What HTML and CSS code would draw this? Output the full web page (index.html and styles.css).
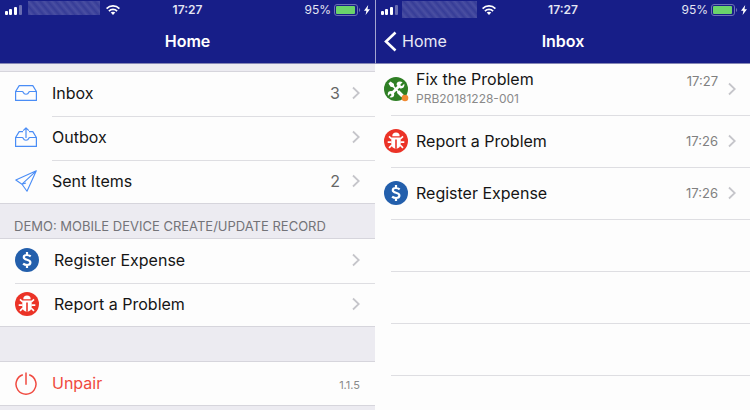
FILE: index.html
```
<!DOCTYPE html>
<html lang="en">
<head>
<meta charset="utf-8">
<title>Home and Inbox</title>
<link rel="stylesheet" href="styles.css">
</head>
<body>
<svg class="defs" aria-hidden="true">
  <symbol id="signal" viewBox="0 0 18 10"><g fill="#fff"><rect x="0" y="6" width="3" height="4" rx="1"/><rect x="4" y="4" width="3" height="6" rx="1"/><rect x="9" y="2" width="3" height="8" rx="1"/><rect x="14" y="0" width="3" height="10" rx="1" opacity=".35"/></g></symbol>
  <symbol id="wifi" viewBox="0 0 14 10"><g fill="none" stroke="#fff" stroke-width="1.7"><path d="M.6 3.6C4.2 0 9.8 0 13.4 3.6"/><path d="M2.9 6.1c2.3-2.2 5.900-2.200 8.200 0"/></g><path d="M4.700 7.600c1.300-1.200 3.300-1.200 4.600 0L7 10z" fill="#fff"/></symbol>
  <symbol id="battery" viewBox="0 0 27 12"><rect x=".5" y=".5" width="23" height="11" rx="2.500" fill="none" stroke="#6c70b4"/><rect x="2" y="2" width="19" height="8" rx="1" fill="#6bd46b"/><path d="M25 4c1.600.8 1.600 3.200 0 4z" fill="#6c70b4"/></symbol>
  <symbol id="bolt" viewBox="0 0 6 10"><path d="M4.200 0L0 5.800h2.400L1.600 10 6 4.200H3.500z" fill="#fff"/></symbol>
  <symbol id="chevron" viewBox="0 0 8 14"><path d="M1 1.500L6.800 7 1 12.500" fill="none" stroke="#c5c5ca" stroke-width="1.800"/></symbol>
  <symbol id="inbox" viewBox="0 0 22 16"><g fill="none" stroke="#4a8df6" stroke-width="1.200" stroke-linejoin="round"><path d="M.6 6.500L4.200.6h13.600l3.600 5.900v8.900H.6z"/><path d="M.6 6.500h6.600c.6 0 .9.400 1.100 1 .8 2.300 4.600 2.300 5.400 0 .2-.6.500-1 1.100-1h6.600"/></g></symbol>
  <symbol id="outbox" viewBox="0 0 22 20"><g fill="none" stroke="#4a8df6" stroke-width="1.200" stroke-linejoin="round"><path d="M8 4.600H4.200L.6 10.500v8.900h20.800v-8.900l-3.600-5.900H14"/><path d="M.6 10.500h6.600c.6 0 .9.400 1.100 1 .8 2.300 4.600 2.300 5.400 0 .2-.6.500-1 1.100-1h6.600"/><path d="M11 11V1M8.200 3.600L11 .8l2.800 2.800"/></g></symbol>
  <symbol id="plane" viewBox="0 0 22 22"><path d="M21.300.8L.8 10l6.200 4.200L12 21.200zM21.300.8L7 14.200M7 14.200l4-1.200" fill="none" stroke="#4a8df6" stroke-width="1.100" stroke-linejoin="round"/></symbol>
  <symbol id="power" viewBox="0 0 22 23"><path d="M7.800 2.700a10 10 0 1 0 6.400 0M11 .5v12.200" fill="none" stroke="#f04a40" stroke-width="1.500"/></symbol>
  <symbol id="dollar" viewBox="0 0 24 24"><circle cx="12" cy="12" r="12" fill="#235fac"/><path d="M15.700 8.300c-1.300-1-2.500-1.300-3.900-1.300-1.700 0-3 .8-3 2.200 0 3.300 6.600 1.700 6.600 5.300 0 1.600-1.400 2.500-3.300 2.500-1.600 0-3-.5-4-1.400M12 4v3.400M12 16.700V20" fill="none" stroke="#fff" stroke-width="2.200"/></symbol>
  <symbol id="bug" viewBox="0 0 24 24"><circle cx="12" cy="12" r="12" fill="#eb3327"/><path d="M8.300 7.300a3.700 3.700 0 0 1 7.400 0z" fill="#fff"/><path d="M7.300 8.500h9.400V15c0 2.700-1.800 4.700-4.700 4.700S7.300 17.700 7.300 15z" fill="#fff"/><path d="M7.700 10L5 7.300M16.300 10L19 7.300M7.500 13.200H3.700M16.500 13.200h3.800M7.900 16L5 18.800M16.100 16l2.900 2.800" stroke="#fff" stroke-width="1.700"/><path d="M12 10.500v9.200" stroke="#eb3327" stroke-width="1.600"/></symbol>
  <symbol id="tools" viewBox="0 0 24 24" overflow="visible"><circle cx="12" cy="12" r="12" fill="#2f7f25"/><path d="M7.500 7.500l9.500 10" stroke="#fff" stroke-width="1.800"/><path d="M4.500 6.500l2-2 3.300 2.200.4 2-1.600 1.500-2-.4z" fill="#fff"/><path d="M14 14.500l4.500 4.500" stroke="#fff" stroke-width="3.400"/><path d="M15.200 9L7.500 16.700" stroke="#fff" stroke-width="2.700"/><path d="M18.600 5.200l-2.200 2.200.3 1.300 1.300.3 2.200-2.200c.9 3-1.500 5.400-4.300 4.500l-3.200-3.200c-.8-2.700 2.400-4.700 5.900-2.900z" fill="#fff"/><circle cx="7" cy="17.300" r="3.200" fill="#fff"/><path d="M7 17.300L3.700 20.600" stroke="#2f7f25" stroke-width="2"/><circle cx="21" cy="21" r="3.300" fill="#f08a33"/></symbol>
</svg>
<div class="screens">
  <section class="screen">
    <header class="topbar">
      <div class="status">
        <div class="carrier"><svg class="signal"><use href="#signal"/></svg><span class="redacted"></span><svg class="wifi"><use href="#wifi"/></svg></div>
        <time>17:27</time>
        <div class="power-state"><span>95%</span><svg class="battery"><use href="#battery"/></svg><svg class="bolt"><use href="#bolt"/></svg></div>
      </div>
      <nav class="navbar"><span></span><h1>Home</h1><span></span></nav>
    </header>
    <main class="home">
      <ul class="group">
        <li><button class="row"><svg class="icon inbox"><use href="#inbox"/></svg><span class="label">Inbox</span><span class="count">3</span><svg class="chevron"><use href="#chevron"/></svg></button></li>
        <li><button class="row"><svg class="icon outbox"><use href="#outbox"/></svg><span class="label">Outbox</span><svg class="chevron"><use href="#chevron"/></svg></button></li>
        <li><button class="row"><svg class="icon plane"><use href="#plane"/></svg><span class="label">Sent Items</span><span class="count">2</span><svg class="chevron"><use href="#chevron"/></svg></button></li>
      </ul>
      <h2 class="group-title">DEMO: MOBILE DEVICE CREATE/UPDATE RECORD</h2>
      <ul class="group wide">
        <li><button class="row"><svg class="badge"><use href="#dollar"/></svg><span class="label">Register Expense</span><svg class="chevron"><use href="#chevron"/></svg></button></li>
        <li><button class="row"><svg class="badge"><use href="#bug"/></svg><span class="label">Report a Problem</span><svg class="chevron"><use href="#chevron"/></svg></button></li>
      </ul>
      <ul class="group last">
        <li><button class="row unpair"><svg class="icon power"><use href="#power"/></svg><span class="label">Unpair</span><span class="version">1.1.5</span></button></li>
      </ul>
    </main>
  </section>
  <section class="screen second">
    <header class="topbar">
      <div class="status">
        <div class="carrier"><svg class="signal"><use href="#signal"/></svg><span class="redacted tall"></span><svg class="wifi"><use href="#wifi"/></svg></div>
        <time>17:27</time>
        <div class="power-state"><span>95%</span><svg class="battery"><use href="#battery"/></svg><svg class="bolt"><use href="#bolt"/></svg></div>
      </div>
      <nav class="navbar"><button class="back"><svg viewBox="0 0 13 21"><path d="M11.500 1.500L2 10.500l9.500 9" fill="none" stroke="#fff" stroke-width="2.600"/></svg>Home</button><h1>Inbox</h1><span></span></nav>
    </header>
    <main class="messages">
      <ul>
        <li><button class="message"><svg class="badge"><use href="#tools"/></svg><span class="text"><span>Fix the Problem</span><small>PRB20181228-001</small></span><time class="upper">17:27</time><svg class="chevron"><use href="#chevron"/></svg></button></li>
        <li><button class="message"><svg class="badge"><use href="#bug"/></svg><span class="text"><span>Report a Problem</span></span><time>17:26</time><svg class="chevron"><use href="#chevron"/></svg></button></li>
        <li><button class="message"><svg class="badge"><use href="#dollar"/></svg><span class="text"><span>Register Expense</span></span><time>17:26</time><svg class="chevron"><use href="#chevron"/></svg></button></li>
        <li></li>
        <li></li>
        <li></li>
      </ul>
    </main>
  </section>
</div>
</body>
</html>
```
FILE: styles.css
```
* { box-sizing: border-box; }
body { margin: 0; font-family: Inter, "Liberation Sans", sans-serif; font-size: 16px; color: #151515; background: #fdfdfd; }
button { font: inherit; color: inherit; background: none; border: 0; padding: 0; text-align: left; }
ul { list-style: none; margin: 0; padding: 0; }
h1, h2 { margin: 0; }
svg { flex: none; display: block; }
.defs { position: absolute; width: 0; height: 0; }
.screens { display: grid; grid-template-columns: 1fr 1fr; min-height: 100vh; }
.screen { display: flex; flex-direction: column; min-width: 0; }

.topbar { background: #171e88; color: #fff; border-bottom: 1px solid #8587b5; }
.second .topbar { border-left: 1px solid #a3a5d0; }
.status, .navbar { display: grid; grid-template-columns: 1fr auto 1fr; align-items: center; }
.status { height: 19px; padding: 0 5px; font-size: 12px; color: #e4e5f3; }
.status time { font-weight: 600; }
.carrier, .power-state { display: flex; align-items: center; }
.power-state { justify-content: flex-end; gap: 3px; }
.second .power-state { margin-right: -2px; }
.signal { width: 18px; height: 10px; }
.redacted { width: 72px; height: 14px; margin: 0 6px 3px 5px; background: repeating-linear-gradient(50deg, #363c97 0, #4a4fa2 3px, #363c97 6px); }
.redacted.tall { height: 17px; width: 75px; margin: 0 5px 0 3px; }
.wifi { width: 14px; height: 10px; }
.battery { width: 27px; height: 12px; }
.bolt { width: 6px; height: 10px; }
.navbar { height: 44px; padding: 0 8px; }
.navbar h1 { font-size: 16px; font-weight: 600; }
.back { display: flex; align-items: center; gap: 5px; color: #e8e9f5; }
.back svg { width: 13px; height: 21px; }

.home { background: #ecebf1; padding-top: 7px; flex: 1; }
.group { background: #fdfdfd; border-top: 1px solid #d6d5dc; border-bottom: 1px solid #d6d5dc; }
.group li { height: 44px; padding-left: 15px; }
.group li:last-child { height: 43px; }
.row { display: flex; align-items: center; width: 100%; height: 42px; padding-right: 15px; }
.group li + li { background: linear-gradient(#dedee2, #dedee2) 52px 0 / 100% 1px no-repeat; }
.group.wide li + li { background-position: 15px 0; }
.icon { width: 22px; margin-right: 15px; }
.inbox { height: 16px; }
.outbox { height: 20px; }
.plane { height: 22px; }
.power { height: 23px; }
.badge { width: 24px; height: 24px; overflow: visible; }
.row .badge { margin-right: 15px; }
.label { flex: 1; }
.count { color: #666; margin-right: 12px; }
.chevron { width: 8px; height: 14px; }
.group-title { height: 34px; padding: 14px 14px 0; font-size: 13px; line-height: 16px; font-weight: 400; color: #737378; white-space: nowrap; }
.last { margin-top: 34px; }
.unpair { color: #f04a40; }
.version { font-size: 11px; color: #8a8a8a; padding-top: 4px; }

.messages li { height: 52px; padding-left: 9px; background: linear-gradient(#dedee2, #dedee2) 16px 100% / 100% 1px no-repeat; }
.message { display: flex; align-items: center; width: 100%; height: 50px; padding-right: 14px; }
.text { flex: 1; margin-left: 8px; display: grid; line-height: 20px; }
.text small { font-size: 12px; color: #8a8a8a; }
.message time { font-size: 13px; color: #808080; margin-right: 10px; }
.message .upper { padding-bottom: 16px; }
```
